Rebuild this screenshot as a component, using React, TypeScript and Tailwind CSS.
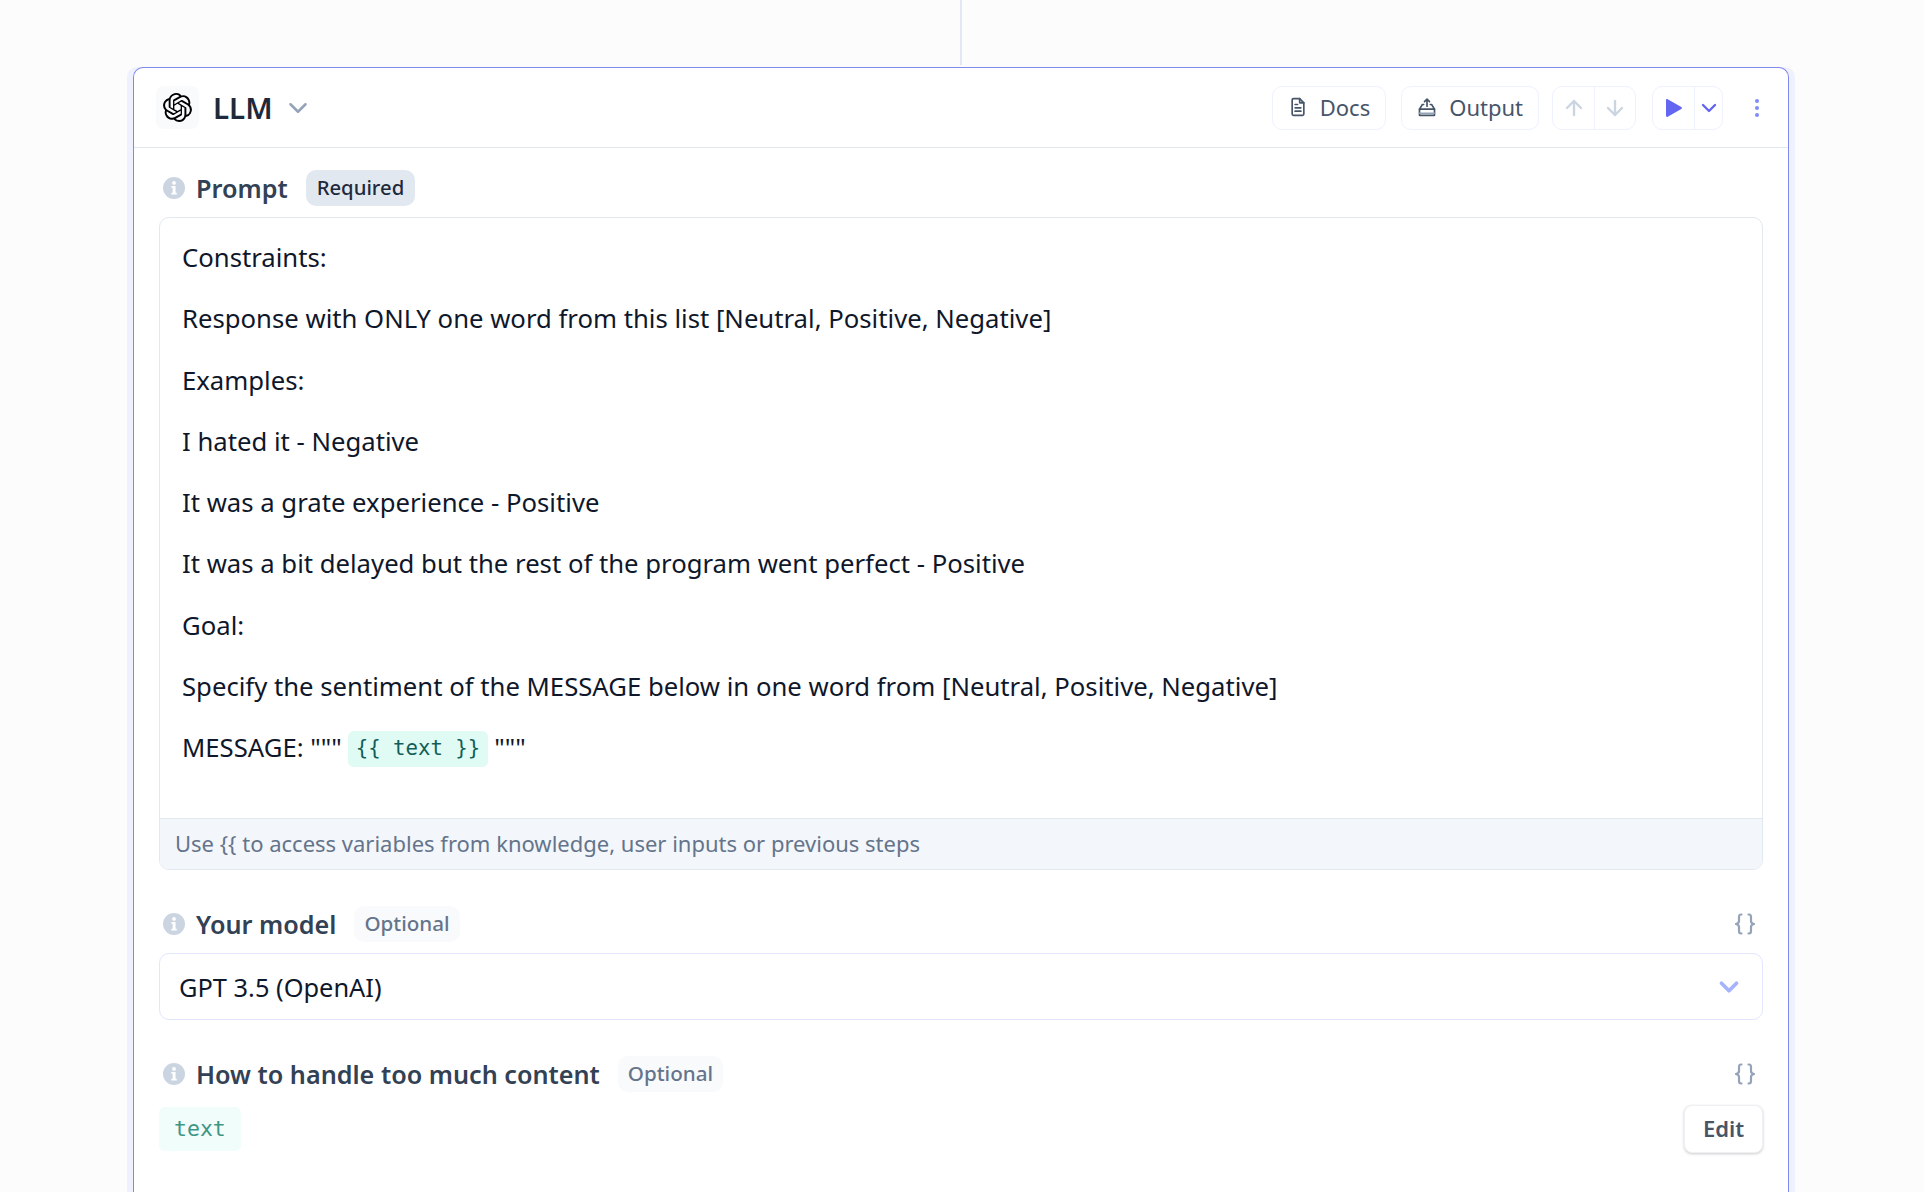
import { ArrowDown, ArrowUp, ChevronDown } from "lucide-react";
import { SiOpenai } from "react-icons/si";

const promptLines = [
  "Constraints:",
  "Response with ONLY one word from this list [Neutral, Positive, Negative]",
  "Examples:",
  "I hated it - Negative",
  "It was a grate experience - Positive",
  "It was a bit delayed but the rest of the program went perfect - Positive",
  "Goal:",
  "Specify the sentiment of the MESSAGE below in one word from [Neutral, Positive, Negative]",
];

function InfoIcon() {
  return (
    <svg viewBox="0 0 20 20" className="w-[22px] h-[22px] shrink-0 text-[#cbd5e1]" fill="currentColor">
      <circle cx="10" cy="10" r="10" />
      <circle cx="10" cy="5.4" r="1.7" fill="#fff" />
      <path d="M7.6 8.2h3.8v6.2h1.1v1.6H7.6v-1.6h1.2V9.8H7.6z" fill="#fff" />
    </svg>
  );
}

function DocIcon() {
  return (
    <svg viewBox="0 0 24 24" className="w-[20px] h-[20px]" fill="none" stroke="#475569" strokeWidth="2" strokeLinejoin="round" strokeLinecap="round">
      <path d="M5 3.5a1.5 1.5 0 0 1 1.5-1.5H14l5 5v13.5a1.5 1.5 0 0 1-1.5 1.5h-11A1.5 1.5 0 0 1 5 20.5z" />
      <path d="M14 2v5h5M8.5 9h3M8.5 13h7M8.5 17h7" />
    </svg>
  );
}

function OutputIcon() {
  return (
    <svg viewBox="0 0 24 24" className="w-[20px] h-[20px]" fill="none" stroke="#475569" strokeWidth="2" strokeLinejoin="round" strokeLinecap="round">
      <path d="M12 11V2.5M9 5.5l3-3 3 3" />
      <path d="M8 9H6.5L3 14.5h18L17.5 9H16" />
      <path d="M3 14.5V22h18v-7.5" />
      <path d="M3 19.5h18" stroke="#94a3b8" />
    </svg>
  );
}

function BracesIcon() {
  return (
    <svg viewBox="0 0 20 22" className="ml-auto mr-[8px] w-[20px] h-[22px]" fill="none" stroke="#94a3b8" strokeWidth="2.2" strokeLinejoin="round" strokeLinecap="round">
      <path d="M6.5 1.5H6C4.5 1.5 4 2.5 4 4v4c0 1.6-1 2.6-3 3 2 .4 3 1.4 3 3v4c0 1.5.5 2.5 2 2.5h.5" />
      <path d="M13.5 1.5h.5c1.5 0 2 1 2 2.5v4c0 1.6 1 2.6 3 3-2 .4-3 1.4-3 3v4c0 1.5-.5 2.5-2 2.5h-.5" />
    </svg>
  );
}

function Badge({ label, strong }: { label: string; strong?: boolean }) {
  return (
    <span
      className={
        strong
          ? "h-[36px] px-[11px] pb-[1px] flex items-center rounded-[10px] bg-[#e2e8f0] text-[#1e293b] text-[20.3px] font-medium"
          : "h-[36px] px-[10px] pb-[1px] flex items-center rounded-[10px] bg-[#f8fafc] text-[#64748b] text-[20.6px] font-medium"
      }
    >
      {label}
    </span>
  );
}

function FieldLabel({ label, badge, strong, braces }: { label: string; badge: string; strong?: boolean; braces?: boolean }) {
  return (
    <div className="h-[36px] flex items-center">
      <div className="w-[37px] pl-[4px]">
        <InfoIcon />
      </div>
      <span className="pt-[1px] text-[25.2px] font-semibold text-[#334155] mr-[18px]">{label}</span>
      <Badge label={badge} strong={strong} />
      {braces && <BracesIcon />}
    </div>
  );
}

export default function App() {
  return (
    <div
      className="h-[1192px] overflow-hidden bg-[#fcfcfd] flex flex-col"
      style={{ fontFamily: '"Noto Sans", sans-serif' }}
    >
      <div className="w-[2px] h-[65px] mb-[2px] ml-[960px] bg-[#e3e7f3] shrink-0" />
      <div className="ml-[133px] mr-[135px] flex-1 bg-white border border-b-0 border-[#7f88ec] rounded-t-[10px] shadow-[6px_0_0_0_#f0f1fe,-6px_0_0_0_#f0f1fe]">
        {/* 헤더 */}
        <div className="h-[80px] border-b border-[#e2e8f0] flex items-center pl-[22px] pr-[25px]">
          <div className="w-[43px] h-[43px] rounded-[8px] bg-[#f8fafc] flex items-center justify-center">
            <SiOpenai className="w-[29px] h-[29px] text-black" />
          </div>
          <span className="ml-[14px] pt-[1px] text-[29.5px] font-semibold text-[#1e293b]">LLM</span>
          <ChevronDown className="ml-[10px] w-[30px] h-[30px] text-[#94a3b8]" strokeWidth={2} />

          <div className="ml-auto h-[44px] px-[15px] pb-[1px] flex items-center gap-[12px] border border-[#eef2ff] rounded-[10px] text-[22px] text-[#475569]">
            <DocIcon />
            Docs
          </div>
          <div className="ml-[15px] h-[44px] px-[15px] pb-[1px] flex items-center gap-[12px] border border-[#eef2ff] rounded-[10px] text-[22px] text-[#475569]">
            <OutputIcon />
            Output
          </div>
          <div className="ml-[13px] h-[44px] w-[84px] flex border border-[#eef2ff] rounded-[10px]">
            <div className="w-[42px] flex items-center justify-center border-r border-[#eef2ff]">
              <ArrowUp className="w-[24px] h-[24px] text-[#cbd5e1]" strokeWidth={2.4} />
            </div>
            <div className="flex-1 flex items-center justify-center">
              <ArrowDown className="w-[24px] h-[24px] text-[#cbd5e1]" strokeWidth={2.4} />
            </div>
          </div>
          <div className="ml-[16px] h-[44px] w-[71px] flex border border-[#eef2ff] rounded-[10px]">
            <div className="w-[42px] flex items-center justify-center border-r border-[#eef2ff]">
              <svg viewBox="0 0 16 18" className="w-[16px] h-[18px]" fill="#6366f1">
                <path d="M0 1.2C0 .3.9-.3 1.7.2l13.6 7.7c.8.5.8 1.6 0 2.1L1.7 17.8C.9 18.3 0 17.7 0 16.8z" />
              </svg>
            </div>
            <div className="flex-1 flex items-center justify-center">
              <ChevronDown className="w-[24px] h-[24px] text-[#6366f1]" strokeWidth={2.4} />
            </div>
          </div>
          <div className="ml-[28px] w-[12px] flex flex-col items-center gap-[3px]">
            <span className="w-[4px] h-[4px] rounded-full bg-[#818cf8]" />
            <span className="w-[4px] h-[4px] rounded-full bg-[#818cf8]" />
            <span className="w-[4px] h-[4px] rounded-full bg-[#818cf8]" />
          </div>
        </div>

        {/* 본문 */}
        <div className="pt-[22px] pl-[25px] pr-[25px]">
          <FieldLabel label="Prompt" badge="Required" strong />

          <div className="mt-[11px] h-[653px] border border-[#e2e8f0] rounded-[10px] overflow-hidden flex flex-col">
            <div className="flex-1 pt-[9px] pl-[22px] text-[25.7px] leading-[61.3px] text-[#0f172a]">
              {promptLines.map((line) => (
                <p key={line}>{line}</p>
              ))}
              <p className="flex items-center">
                <span>MESSAGE: """</span>
                <span className="mx-[6px] mt-[2px] h-[36px] px-[8px] flex items-center rounded-[6px] bg-[#e0faf4] text-[#115e59] text-[20.7px] whitespace-pre" style={{ fontFamily: '"DejaVu Sans Mono", monospace' }}>
                  {"{{ text }}"}
                </span>
                <span>"""</span>
              </p>
            </div>
            <div className="h-[51px] pl-[15px] pb-[2px] flex items-center bg-[#f3f6fa] border-t border-[#e2e8f0] text-[22px] text-[#64748b]">
              Use {"{{"} to access variables from knowledge, user inputs or previous steps
            </div>
          </div>

          <div className="mt-[36px]">
            <FieldLabel label="Your model" badge="Optional" braces />
          </div>
          <div className="mt-[11px] h-[67px] pl-[19px] pr-[18px] pt-[1px] flex items-center justify-between border border-[#e0e7ff] rounded-[10px] text-[25.4px] text-[#0f172a]">
            GPT 3.5 (OpenAI)
            <ChevronDown className="w-[30px] h-[30px] text-[#a5b4fc]" strokeWidth={3} />
          </div>

          <div className="mt-[36px]">
            <FieldLabel label="How to handle too much content" badge="Optional" braces />
          </div>
          <div className="mt-[13px] flex items-center justify-between">
            <span className="h-[44px] px-[15px] flex items-center rounded-[6px] bg-[#f0fdfa] text-[#3d9584] text-[21.5px]" style={{ fontFamily: '"DejaVu Sans Mono", monospace' }}>
              text
            </span>
            <button className="w-[79px] h-[48px] pb-[2px] flex items-center justify-center bg-white border border-[#eef0f4] rounded-[8px] shadow-[0_1px_3px_rgba(0,0,0,0.2)] text-[22px] font-semibold text-[#475569]">
              Edit
            </button>
          </div>
        </div>
      </div>
    </div>
  );
}
